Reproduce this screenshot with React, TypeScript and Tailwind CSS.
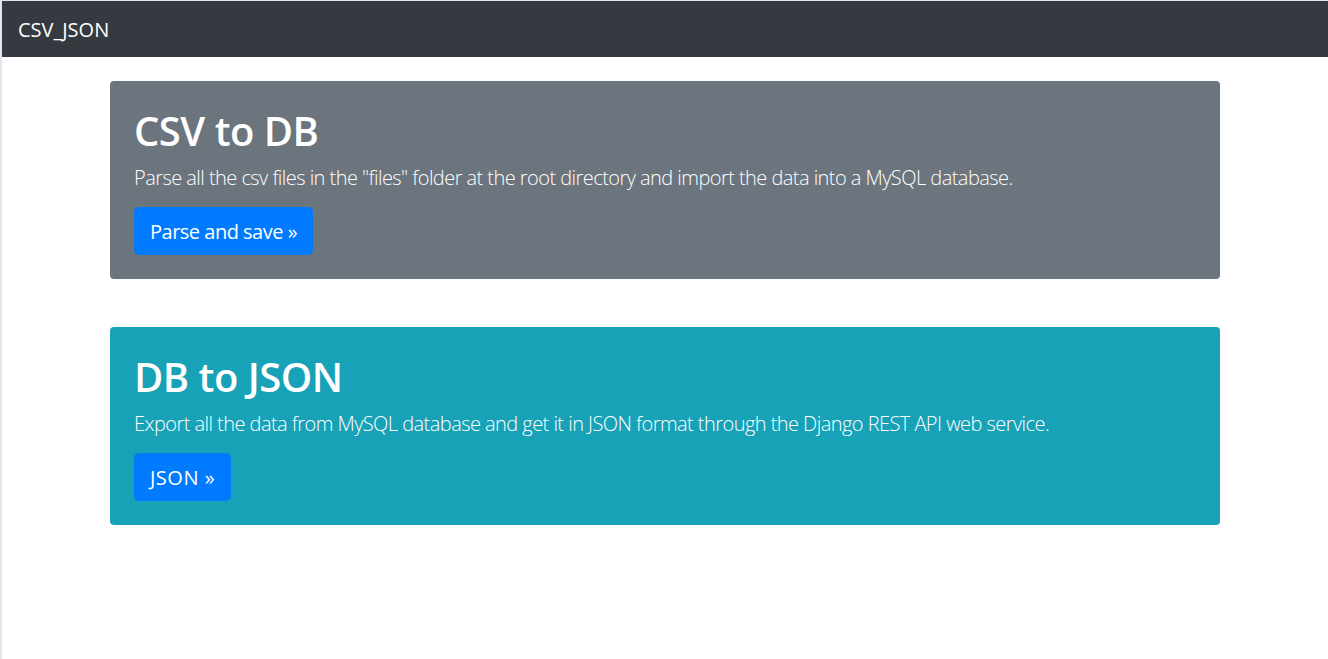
export default function App() {
    const font = { fontFamily: '"Open Sans", "Noto Sans", sans-serif' };

    return (
        <div className="min-h-screen border-l-2 border-t border-[#dee7f0] bg-white" style={font}>
            {/* Navbar */}
            <nav className="flex h-14 items-center bg-[#343a40] px-4">
                <span className="pt-0.5 text-xl text-white">CSV_JSON</span>
            </nav>

            <div className="mx-auto mt-6 w-[1140px] px-[15px]">
                {/* CSV to DB */}
                <div className="rounded bg-[#6c757d] px-6 pt-[26px] pb-6 text-white">
                    <h1 className="mb-2 text-[40px] font-semibold leading-[1.2] tracking-[-0.5px]">CSV to DB</h1>
                    <p className="mb-[14px] text-xl font-light leading-[1.5] tracking-[-0.55px]">
                        Parse all the csv files in the "files" folder at the root directory and import the data into a MySQL database.
                    </p>
                    <button className="h-12 rounded-[5px] bg-[#007bff] px-4 pt-0.5 text-xl leading-[1.5] tracking-[-0.5px] text-white">
                        Parse and save »
                    </button>
                </div>

                {/* DB to JSON */}
                <div className="mt-12 rounded bg-[#17a2b8] px-6 pt-[26px] pb-6 text-white">
                    <h1 className="mb-2 text-[40px] font-semibold leading-[1.2] tracking-[-0.5px]">DB to JSON</h1>
                    <p className="mb-[14px] text-xl font-light leading-[1.5] tracking-[-0.55px]">
                        Export all the data from MySQL database and get it in JSON format through the Django REST API web service.
                    </p>
                    <button className="h-12 rounded-[5px] bg-[#007bff] px-4 pt-0.5 text-xl leading-[1.5] tracking-[0.5px] text-white">
                        JSON »
                    </button>
                </div>
            </div>
        </div>
    );
}
